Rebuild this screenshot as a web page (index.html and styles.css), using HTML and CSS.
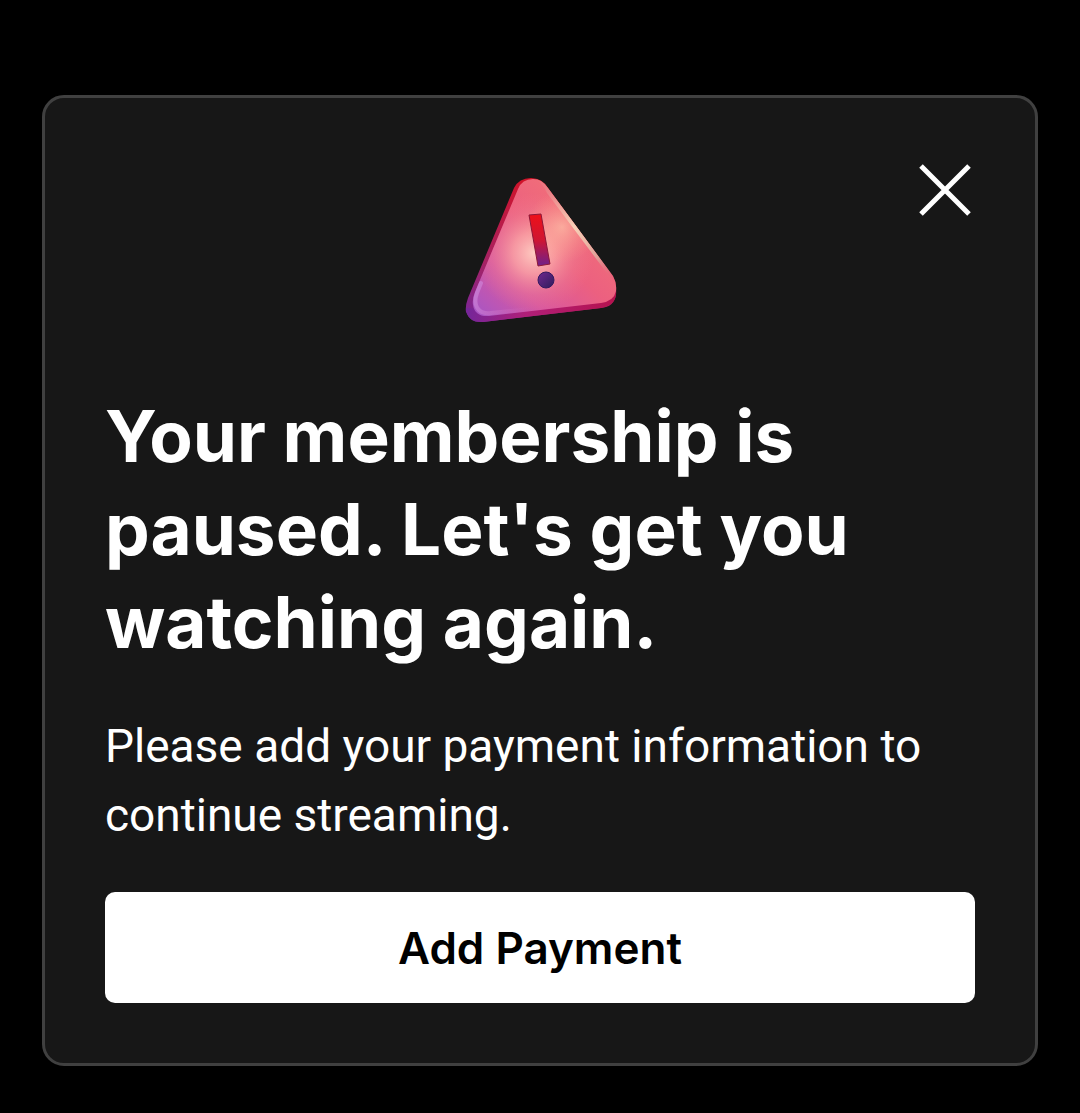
FILE: index.html
```html
<!DOCTYPE html>
<html lang="en">
<head>
  <meta charset="UTF-8">
  <meta name="viewport" content="width=device-width, initial-scale=1.0">
  <title>Membership paused</title>
  <link rel="stylesheet" href="styles.css">
</head>
<body>
  <main class="card">
    <div class="card-top">
      <svg class="warning" viewBox="0 -7 180 180" aria-hidden="true">
        <defs>
          <linearGradient id="side" x1="0.1" y1="1" x2="0.6" y2="0">
            <stop offset="0" stop-color="#7b2597"/>
            <stop offset="0.35" stop-color="#a62263"/>
            <stop offset="1" stop-color="#d8101f"/>
          </linearGradient>
          <linearGradient id="base" x1="0" y1="0" x2="1" y2="0">
            <stop offset="0" stop-color="#74269a"/>
            <stop offset="0.4" stop-color="#b01f78"/>
            <stop offset="1" stop-color="#b5124e"/>
          </linearGradient>
          <linearGradient id="face" x1="0.05" y1="1" x2="0.75" y2="0.3">
            <stop offset="0" stop-color="#a855c4"/>
            <stop offset="0.35" stop-color="#d8589f"/>
            <stop offset="0.7" stop-color="#ec6080"/>
            <stop offset="1" stop-color="#f06c7a"/>
          </linearGradient>
          <radialGradient id="glow" gradientUnits="userSpaceOnUse" cx="84" cy="88" r="60">
            <stop offset="0" stop-color="#ffd0c4" stop-opacity="0.95"/>
            <stop offset="0.35" stop-color="#fcaaa8" stop-opacity="0.75"/>
            <stop offset="0.7" stop-color="#f28a98" stop-opacity="0.3"/>
            <stop offset="1" stop-color="#f77f8c" stop-opacity="0"/>
          </radialGradient>
          <radialGradient id="shine" gradientUnits="userSpaceOnUse" cx="112" cy="62" r="36">
            <stop offset="0" stop-color="#ffc0a6" stop-opacity="0.7"/>
            <stop offset="1" stop-color="#ff9c86" stop-opacity="0"/>
          </radialGradient>
          <linearGradient id="rim" gradientUnits="userSpaceOnUse" x1="90" y1="16" x2="163" y2="120">
            <stop offset="0" stop-color="#e0868a" stop-opacity="0.3"/>
            <stop offset="0.45" stop-color="#f8d2b8"/>
            <stop offset="0.75" stop-color="#dfa097"/>
            <stop offset="1" stop-color="#e6526f" stop-opacity="0"/>
          </linearGradient>
          <linearGradient id="corner" gradientUnits="userSpaceOnUse" x1="25" y1="130" x2="80" y2="148">
            <stop offset="0" stop-color="#d08ce0" stop-opacity="0.6"/>
            <stop offset="1" stop-color="#d870b8" stop-opacity="0"/>
          </linearGradient>
          <linearGradient id="bar" x1="0" y1="0" x2="0" y2="1">
            <stop offset="0" stop-color="#ee1019"/>
            <stop offset="0.5" stop-color="#cf1532"/>
            <stop offset="1" stop-color="#70208a"/>
          </linearGradient>
          <linearGradient id="dot" x1="0" y1="0" x2="1" y2="1">
            <stop offset="0" stop-color="#71288f"/>
            <stop offset="1" stop-color="#2e1c5c"/>
          </linearGradient>
        </defs>
        <path fill="url(#side)" d="M64 23 Q69 13 81 13 Q92 13 98 23 L163 112 Q167 119 166 130 Q164 142 151 143 L33 157 Q20 158 16 147 Q15 141 18 133 Z"/>
        <path fill="url(#base)" d="M16 143 Q17 158 33 157 L151 143 Q166 140 166 128 L145 132 L36 144 Z"/>
        <path fill="url(#face)" d="M68 24 Q72 14 83 14 Q92 14 98 23 L163 111 Q167 118 166 126 Q164 136 151 138 L39 151 Q25 152 23 140 Q22 134 25 127 Z"/>
        <path fill="url(#glow)" d="M68 24 Q72 14 83 14 Q92 14 98 23 L163 111 Q167 118 166 126 Q164 136 151 138 L39 151 Q25 152 23 140 Q22 134 25 127 Z"/>
        <path fill="url(#shine)" d="M68 24 Q72 14 83 14 Q92 14 98 23 L163 111 Q167 118 166 126 Q164 136 151 138 L39 151 Q25 152 23 140 Q22 134 25 127 Z"/>
        <path fill="url(#rim)" d="M86 14 Q93 15 98 23 L163 111 Q166 116 166 124 Q164 116 159 111 L97 28 Q93 19 86 14 Z"/>
        <path fill="none" stroke="url(#corner)" stroke-width="4" stroke-linecap="round" d="M31 118 L27 128 Q23 139 29 145 Q33 149 41 148 L80 144"/>
        <path fill="url(#bar)" stroke="#8c1738" stroke-width="1" d="M79 50 L91 49 L100 99 L88 101 Z"/>
        <circle cx="96" cy="115" r="8" fill="url(#dot)" stroke="#341a60"/>
      </svg>
      <button class="close" type="button" aria-label="Close">
        <svg class="close-icon" viewBox="0 0 52 52" aria-hidden="true">
          <path d="M2 2 L50 50 M50 2 L2 50"/>
        </svg>
      </button>
    </div>
    <h1 class="title">Your membership is paused. Let's get you watching again.</h1>
    <p class="message">Please add your payment information to continue streaming.</p>
    <button class="add-payment" type="button">Add Payment</button>
  </main>
</body>
</html>
```
FILE: styles.css
```css
* {
  box-sizing: border-box;
}

body {
  margin: 0;
  padding: 95px 42px 47px;
  background: #000;
  color: #fff;
  font-family: Inter, "Liberation Sans", sans-serif;
}

.card {
  display: flex;
  flex-direction: column;
  padding: 60px;
  background: #171717;
  border: 3px solid #404040;
  border-radius: 22px;
}

/* icon in the middle, close button on the right */
.card-top {
  display: grid;
  grid-template-columns: 1fr auto 1fr;
  align-items: start;
}

.warning {
  grid-column: 2;
  width: 180px;
  height: 180px;
}

.close {
  justify-self: end;
  display: flex;
  align-items: center;
  justify-content: center;
  width: 60px;
  height: 64px;
  padding: 0;
  background: none;
  border: 0;
  cursor: pointer;
}

.close-icon {
  width: 52px;
  height: 52px;
}

.close-icon path {
  fill: none;
  stroke: #fff;
  stroke-width: 5;
}

.title {
  margin: 52px 0 43px;
  font-size: 71px;
  font-weight: 700;
  line-height: 93px;
}

.message {
  margin: 0 0 42px;
  font-family: Roboto, "Liberation Sans", sans-serif;
  font-size: 46px;
  font-weight: 400;
  line-height: 69px;
}

.add-payment {
  width: 100%;
  height: 111px;
  background: #fff;
  border: 0;
  border-radius: 10px;
  color: #000;
  font-family: inherit;
  font-size: 44px;
  font-weight: 600;
  cursor: pointer;
}
```
